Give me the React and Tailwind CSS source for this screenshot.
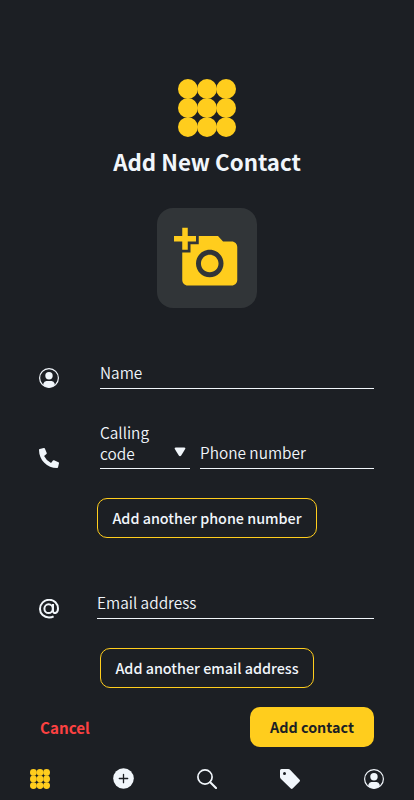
import { MdAddAPhoto } from "react-icons/md";
import { FaPhoneAlt } from "react-icons/fa";

function DotGrid({ className }) {
  const steps = [9.9, 29, 48.1];
  return (
    <svg viewBox="0 0 58 58" className={className} fill="#ffcd1d">
      {steps.map((y) => steps.map((x) => <circle key={`${x}-${y}`} cx={x} cy={y} r="9.9" />))}
    </svg>
  );
}

function UserCircle({ className }) {
  return (
    <svg viewBox="0 0 20 20" className={className} fill="none">
      <circle cx="10" cy="10" r="9.4" stroke="currentColor" strokeWidth="1.2" />
      <circle cx="10" cy="7.8" r="3.7" fill="currentColor" />
      <path d="M4.3 17.2V15.8Q5.2 13.1 7.4 13.1H12.6Q14.8 13.1 15.7 15.8V17.2Q13.3 19.4 10 19.4Q6.7 19.4 4.3 17.2Z" fill="currentColor" />
    </svg>
  );
}

function AtSign({ className }) {
  return (
    <svg viewBox="0 0 20 20" className={className} fill="none" stroke="currentColor" strokeWidth="2">
      <ellipse cx="9.6" cy="9.7" rx="4.2" ry="4.4" />
      <path d="M14 5V12C14 15.2 19 14.8 19 9.6C19 4.3 15 .8 10.3 .8A9.1 9.1 0 0 0 1 9.9C1 15 5 18.4 10 18.4C11.8 18.4 13.4 18 14.6 17.3" />
    </svg>
  );
}

function Search({ className }) {
  return (
    <svg viewBox="0 0 20 20" className={className} fill="none" stroke="currentColor">
      <circle cx="8" cy="8" r="7.1" strokeWidth="1.7" />
      <path d="M13.2 13.2L19 19" strokeWidth="2.1" strokeLinecap="round" />
    </svg>
  );
}

function Tag({ className }) {
  return (
    <svg viewBox="0 0 20 20" className={className} fill="currentColor" fillRule="evenodd">
      <path d="M0 1.5Q0 0 1.5 0H8.2Q9.4 0 10.3 .9L19.6 10.7Q20.4 11.6 19.6 12.5L12.6 19.5Q11.7 20.4 10.8 19.5L1 10Q0 9 0 8ZM4.5 2.9A1.5 1.5 0 1 0 4.5 5.9A1.5 1.5 0 1 0 4.5 2.9Z" />
    </svg>
  );
}

function PlusCircle({ className }) {
  return (
    <svg viewBox="0 0 21 21" className={className}>
      <circle cx="10.5" cy="10.5" r="10.3" fill="currentColor" />
      <path d="M10.5 6.3V14.7M6.3 10.5H14.7" stroke="#1c1f24" strokeWidth="1.3" strokeLinecap="round" />
    </svg>
  );
}

function Field({ children, className }) {
  return <div className={`flex items-end border-b border-[#f1f6fb] font-[350] ${className}`}>{children}</div>;
}

export default function App() {
  return (
    <main className="flex h-[800px] w-[414px] flex-col overflow-hidden bg-[#1c1f24] font-['Noto_Sans_CJK_JP',sans-serif] text-[15.4px] leading-[21px] text-[#f1f6fb]">
      <header className="flex flex-col items-center pt-[79px]">
        <DotGrid className="size-[58px]" />
        <h1 className="mt-[8px] text-[22.3px] leading-8 font-bold whitespace-nowrap">Add New Contact</h1>
        <button className="mt-[31px] flex size-[100px] items-center justify-center rounded-[16px] bg-[#313538]">
          <MdAddAPhoto className="ml-[-1px] size-[66px] text-[#ffcd1d]" />
        </button>
      </header>

      <form className="flex flex-col pr-10 pl-[39px]">
        <div className="mt-[41px] flex h-10 items-end">
          <UserCircle className="mr-[41px] mb-[1px] size-5" />
          <Field className="h-10 flex-1 pb-[5px]">Name</Field>
        </div>
        <div className="mt-[30px] flex h-[50px] items-end">
          <FaPhoneAlt className="mr-[41px] mb-[1px] size-5" />
          <Field className="h-[50px] w-[90px] justify-between pb-[4px]">
            <span className="w-[60px]">Calling code</span>
            <svg viewBox="0 0 12 10" className="mr-1 mb-[7px] h-[10px] w-3" fill="currentColor">
              <path d="M1.6.5H10.4Q12 .6 11.2 2.1L7.2 8.4Q6 10 4.8 8.4L.8 2.1Q0 .6 1.6.5Z" />
            </svg>
          </Field>
          <Field className="ml-[10px] h-[50px] flex-1 pb-[5px]">Phone number</Field>
        </div>
        <button type="button" className="mt-[29px] ml-[58px] h-10 w-[220px] rounded-[10px] border border-[#ffcd1d] pb-[2px] text-[14.35px] font-medium whitespace-nowrap">
          Add another phone number
        </button>
        <div className="mt-[41px] flex h-10 items-end">
          <AtSign className="mr-[38px] size-5" />
          <Field className="h-10 flex-1 pb-[5px]">Email address</Field>
        </div>
        <button type="button" className="mt-[29px] ml-[61px] h-10 w-[214px] rounded-[10px] border border-[#ffcd1d] pb-[2px] text-[14.35px] font-medium whitespace-nowrap">
          Add another email address
        </button>
        <div className="mt-[19px] flex h-10 items-center justify-between">
          <button type="button" className="ml-[1px] text-[15.2px] font-bold text-[#fb4141]">Cancel</button>
          <button type="button" className="h-10 w-[124px] rounded-[10px] bg-[#ffcd1d] pb-[2px] text-[14.35px] font-bold text-[#1c1f24]">
            Add contact
          </button>
        </div>
      </form>

      <nav className="mt-[21px] flex items-center justify-between pr-[30px] pl-[30px]">
        <DotGrid className="size-5" />
        <PlusCircle className="size-[21px]" />
        <Search className="mr-px -ml-px size-5" />
        <Tag className="mr-px -ml-px size-5" />
        <UserCircle className="size-5" />
      </nav>
    </main>
  );
}
